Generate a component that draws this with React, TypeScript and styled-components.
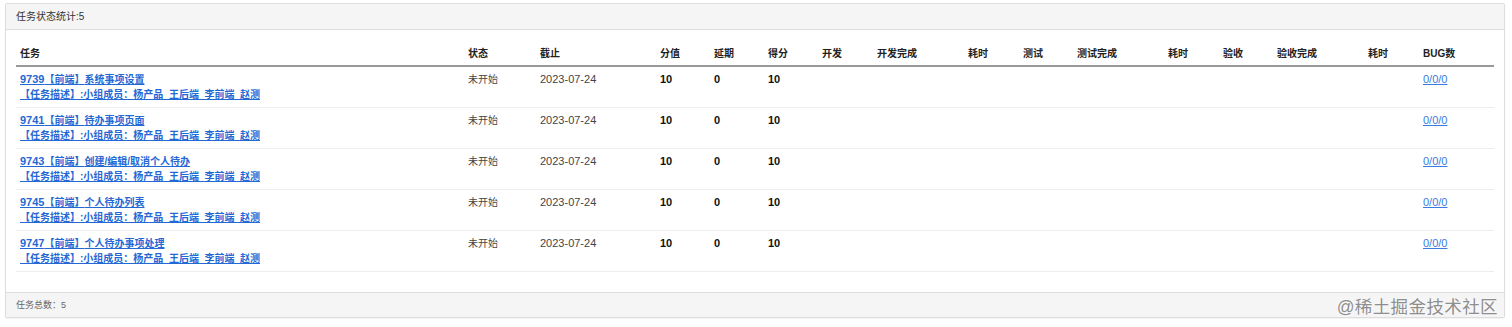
import React from "react";
import styled, { createGlobalStyle } from "styled-components";

const GlobalStyle = createGlobalStyle`
  html, body {
    margin: 0;
    padding: 0;
    background: #fff;
  }
  body {
    font-family: "Liberation Sans", "Noto Sans CJK SC", sans-serif;
    font-size: 10px;
    color: #333;
  }
`;

const Page = styled.div({
  position: "relative",
  width: "1512px",
  height: "327px",
  padding: "3px 7px 0 5px",
  boxSizing: "border-box",
});

const Panel = styled.div({
  border: "1px solid #ddd",
  borderRadius: "2px",
  background: "#fff",
  boxShadow: "0 1px 1px rgba(0,0,0,0.05)",
});

const PanelHeading = styled.div({
  height: "25px",
  lineHeight: "25px",
  padding: "0 10px",
  background: "#f5f5f5",
  borderBottom: "1px solid #ddd",
  fontSize: "10px",
  color: "#333",
});

const PanelBody = styled.div({
  padding: "11px 10px 10px",
});

const Table = styled.table({
  width: "100%",
  tableLayout: "fixed",
  borderCollapse: "collapse",
  marginBottom: "10px",
});

const Th = styled.th({
  textAlign: "left",
  fontWeight: "bold",
  fontSize: "10px",
  lineHeight: "15px",
  padding: "5px 4px 4px",
  borderBottom: "2px solid #999",
  color: "#222",
  whiteSpace: "nowrap",
});

const Td = styled.td<{ $bold?: boolean; $num?: boolean }>`
  vertical-align: top;
  font-size: ${(p) => (p.$num ? "11px" : "10px")};
  line-height: 15px;
  padding: 5px 4px;
  border-bottom: 1px solid #eee;
  font-weight: ${(p) => (p.$bold ? "bold" : "normal")};
  color: ${(p) => (p.$bold ? "#111" : "#444")};
  white-space: nowrap;
`;

const TaskLink = styled.a({
  display: "block",
  color: "#2468d4",
  fontWeight: "bold",
  textDecoration: "underline",
});

const TaskId = styled.span({
  fontSize: "11px",
});

const BugLink = styled.a({
  color: "#3a7be0",
  textDecoration: "underline",
});

const PanelFooter = styled.div({
  height: "24px",
  lineHeight: "24px",
  padding: "0 10px",
  background: "#f5f5f5",
  borderTop: "1px solid #ddd",
  fontSize: "9px",
  color: "#666",
});

const Watermark = styled.div({
  position: "absolute",
  right: "14px",
  bottom: "10px",
  fontSize: "17.5px",
  lineHeight: "20px",
  color: "#8e8e8e",
  letterSpacing: "0.4px",
  textShadow: "0 0 2px #fff",
});

const columns = [
  { label: "任务", width: 448 },
  { label: "状态", width: 72 },
  { label: "截止", width: 120 },
  { label: "分值", width: 54 },
  { label: "延期", width: 54 },
  { label: "得分", width: 54 },
  { label: "开发", width: 55 },
  { label: "开发完成", width: 91 },
  { label: "耗时", width: 55 },
  { label: "测试", width: 54 },
  { label: "测试完成", width: 91 },
  { label: "耗时", width: 55 },
  { label: "验收", width: 54 },
  { label: "验收完成", width: 91 },
  { label: "耗时", width: 55 },
  { label: "BUG数", width: 75 },
];

const tasks = [
  { id: 9739, name: "系统事项设置" },
  { id: 9741, name: "待办事项页面" },
  { id: 9743, name: "创建/编辑/取消个人待办" },
  { id: 9745, name: "个人待办列表" },
  { id: 9747, name: "个人待办事项处理" },
];

const App = () => {
  return (
    <Page>
      <GlobalStyle />
      <Panel>
        <PanelHeading>任务状态统计:5</PanelHeading>
        <PanelBody>
          <Table>
            <colgroup>
              {columns.map((c, i) => (
                <col key={i} style={{ width: c.width }} />
              ))}
            </colgroup>
            <thead>
              <tr>
                {columns.map((c, i) => (
                  <Th key={i}>{c.label}</Th>
                ))}
              </tr>
            </thead>
            <tbody>
              {tasks.map((t) => (
                <tr key={t.id}>
                  <Td>
                    <TaskLink href="#">
                      <TaskId>{t.id}</TaskId>【前端】{t.name}
                    </TaskLink>
                    <TaskLink href="#">
                      【任务描述】:小组成员：杨产品_王后端_李前端_赵测
                    </TaskLink>
                  </Td>
                  <Td>未开始</Td>
                  <Td $num>2023-07-24</Td>
                  <Td $num $bold>10</Td>
                  <Td $num $bold>0</Td>
                  <Td $num $bold>10</Td>
                  <Td />
                  <Td />
                  <Td />
                  <Td />
                  <Td />
                  <Td />
                  <Td />
                  <Td />
                  <Td />
                  <Td $num>
                    <BugLink href="#">0/0/0</BugLink>
                  </Td>
                </tr>
              ))}
            </tbody>
          </Table>
        </PanelBody>
        <PanelFooter>任务总数：5</PanelFooter>
      </Panel>
      <Watermark>@稀土掘金技术社区</Watermark>
    </Page>
  );
};

export default App;
